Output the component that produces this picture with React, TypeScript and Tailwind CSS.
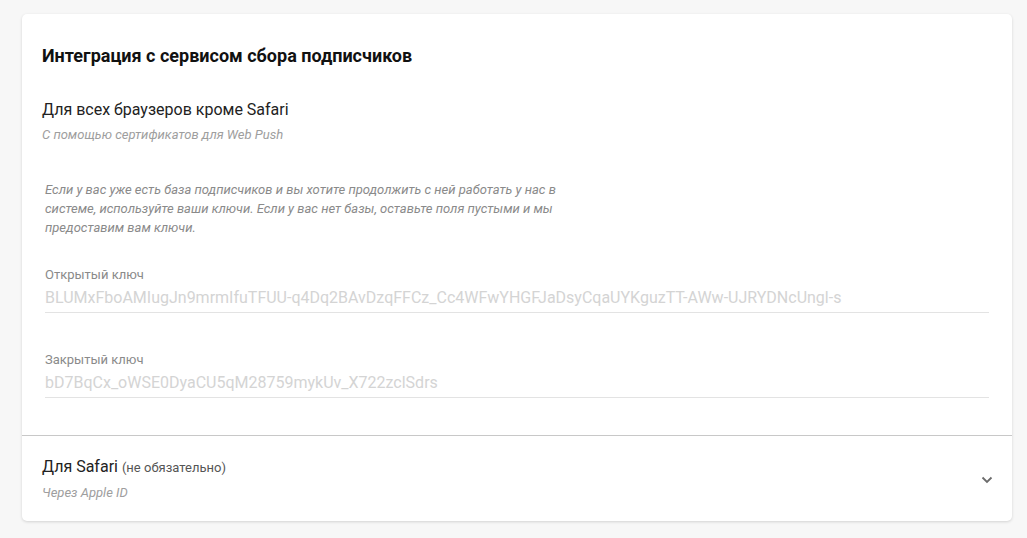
import React from "react";

export default function App() {
  return (
    <div
      className="w-[1027px] h-[538px] bg-[#f7f7f7] pt-[14px] pl-[22px] overflow-hidden"
      style={{ fontFamily: "Roboto, 'Noto Sans', sans-serif" }}
    >
      <div className="w-[990px] bg-white rounded-[5px] shadow-[0_1px_3px_rgba(0,0,0,0.15)]">
        <div className="px-5 pt-[30px] pb-[37px] border-b border-[#c8c8c8]">
          <h1 className="text-[18px] leading-6 font-bold text-[#111]">
            Интеграция с сервисом сбора подписчиков
          </h1>
          <div className="mt-[30px] text-[16px] leading-6 text-[#222]">
            Для всех браузеров кроме Safari
          </div>
          <div className="mt-[5px] text-[13px] leading-4 italic text-[#9e9e9e]">
            С помощью сертификатов для Web Push
          </div>
          <div className="pl-[3px] pr-[3px]">
            <p className="mt-[37px] w-[530px] text-[13px] leading-[19px] italic text-[#8a8a8a]">
              Если у вас уже есть база подписчиков и вы хотите продолжить с ней работать у нас в системе,
              используйте ваши ключи. Если у вас нет базы, оставьте поля пустыми и мы предоставим вам
              ключи.
            </p>
            <div className="mt-[29px]">
              <div className="text-[13px] leading-[18px] text-[#8a8a8a]">Открытый ключ</div>
              <div className="mt-[3px] pb-[3px] border-b border-[#e3e3e3] text-[16px] leading-[22px] text-[#d4d4d4]">
                BLUMxFboAMIugJn9mrmIfuTFUU-q4Dq2BAvDzqFFCz_Cc4WFwYHGFJaDsyCqaUYKguzTT-AWw-UJRYDNcUngl-s
              </div>
            </div>
            <div className="mt-[38px]">
              <div className="text-[13px] leading-[18px] text-[#8a8a8a]">Закрытый ключ</div>
              <div className="mt-[3px] pb-[3px] border-b border-[#e3e3e3] text-[16px] leading-[22px] text-[#d4d4d4]">
                bD7BqCx_oWSE0DyaCU5qM28759mykUv_X722zclSdrs
              </div>
            </div>
          </div>
        </div>
        <div className="flex items-center justify-between pl-5 pr-[19px] pt-[19px] pb-[20px]">
          <div>
            <div className="text-[16px] leading-6 text-[#222]">
              Для Safari <span className="text-[13px] text-[#555]">(не обязательно)</span>
            </div>
            <div className="mt-[5px] text-[13px] leading-4 italic text-[#9e9e9e]">Через Apple ID</div>
          </div>
          <svg width="12" height="8" viewBox="0 0 12 8" className="mt-[4px]">
            <path d="M1.5 1.5 L6 6 L10.5 1.5" fill="none" stroke="#6b6b6b" strokeWidth="1.8" />
          </svg>
        </div>
      </div>
    </div>
  );
}
